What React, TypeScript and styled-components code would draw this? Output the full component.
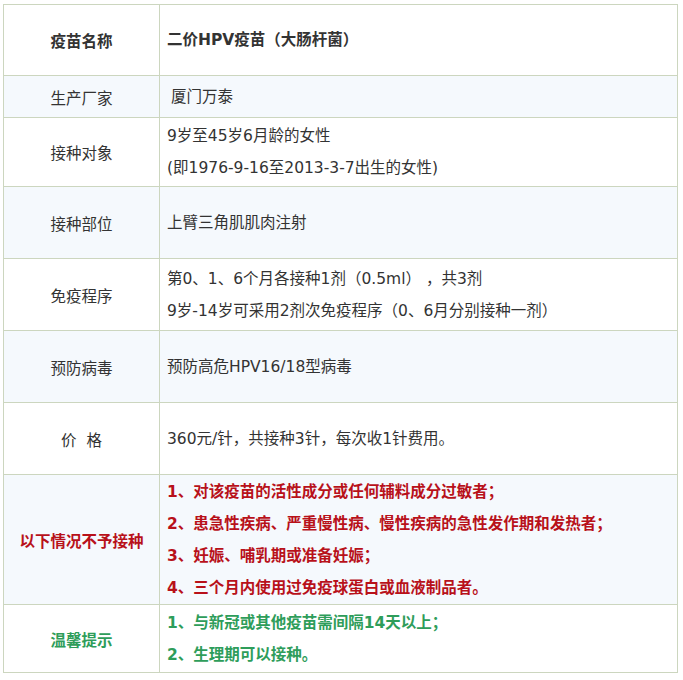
import styled, { createGlobalStyle } from "styled-components";

const GlobalStyle = createGlobalStyle`
  body {
    margin: 0;
    background: #ffffff;
    font-family: "DejaVu Sans", "Noto Sans CJK SC", sans-serif;
  }
`;

const Page = styled.div`
  padding: 4px 3px;
`;

const Table = styled.table`
  width: 675px;
  border-collapse: collapse;
  table-layout: fixed;
  font-size: 15.5px;
  color: #333333;
`;

const Row = styled.tr<{ $shade?: boolean; $h: number }>`
  background: ${(p) => (p.$shade ? "#f5f9fd" : "#ffffff")};
  height: ${(p) => p.$h}px;
`;

const toneColor = (tone?: "red" | "green") =>
  tone === "red" ? "#b8111a" : tone === "green" ? "#2e9d5a" : "#333333";

const Label = styled.td<{ $tone?: "red" | "green"; $bold?: boolean }>`
  width: 143px;
  border: 1px solid #ccd6bf;
  text-align: center;
  vertical-align: middle;
  padding: 0 6px;
  font-weight: ${(p) => (p.$bold || p.$tone ? 700 : 400)};
  color: ${(p) => toneColor(p.$tone)};
`;

const Value = styled.td<{ $tone?: "red" | "green"; $bold?: boolean; $indent?: boolean }>`
  border: 1px solid #ccd6bf;
  vertical-align: middle;
  padding: 0 6px 0 ${(p) => (p.$indent ? 11 : 7)}px;
  line-height: 32px;
  white-space: nowrap;
  font-weight: ${(p) => (p.$bold || p.$tone ? 700 : 400)};
  color: ${(p) => toneColor(p.$tone)};
`;

const Line = styled.div``;

const App = () => {
  return (
    <Page>
      <GlobalStyle />
      <Table>
        <tbody>
          <Row $h={71}>
            <Label $bold>疫苗名称</Label>
            <Value $bold>二价HPV疫苗（大肠杆菌）</Value>
          </Row>
          <Row $h={42} $shade>
            <Label>生产厂家</Label>
            <Value $indent>厦门万泰</Value>
          </Row>
          <Row $h={69}>
            <Label>接种对象</Label>
            <Value>
              <Line>9岁至45岁6月龄的女性</Line>
              <Line>(即1976-9-16至2013-3-7出生的女性)</Line>
            </Value>
          </Row>
          <Row $h={72} $shade>
            <Label>接种部位</Label>
            <Value>上臂三角肌肌肉注射</Value>
          </Row>
          <Row $h={72}>
            <Label>免疫程序</Label>
            <Value>
              <Line>第0、1、6个月各接种1剂（0.5ml） ，共3剂</Line>
              <Line>9岁-14岁可采用2剂次免疫程序（0、6月分别接种一剂）</Line>
            </Value>
          </Row>
          <Row $h={72} $shade>
            <Label>预防病毒</Label>
            <Value>预防高危HPV16/18型病毒</Value>
          </Row>
          <Row $h={72}>
            <Label>价&nbsp;&nbsp;格</Label>
            <Value>360元/针，共接种3针，每次收1针费用。</Value>
          </Row>
          <Row $h={130} $shade>
            <Label $tone="red">以下情况不予接种</Label>
            <Value $tone="red">
              <Line>1、对该疫苗的活性成分或任何辅料成分过敏者；</Line>
              <Line>2、患急性疾病、严重慢性病、慢性疾病的急性发作期和发热者；</Line>
              <Line>3、妊娠、哺乳期或准备妊娠；</Line>
              <Line>4、三个月内使用过免疫球蛋白或血液制品者。</Line>
            </Value>
          </Row>
          <Row $h={68}>
            <Label $tone="green">温馨提示</Label>
            <Value $tone="green">
              <Line>1、与新冠或其他疫苗需间隔14天以上；</Line>
              <Line>2、生理期可以接种。</Line>
            </Value>
          </Row>
        </tbody>
      </Table>
    </Page>
  );
};

export default App;
